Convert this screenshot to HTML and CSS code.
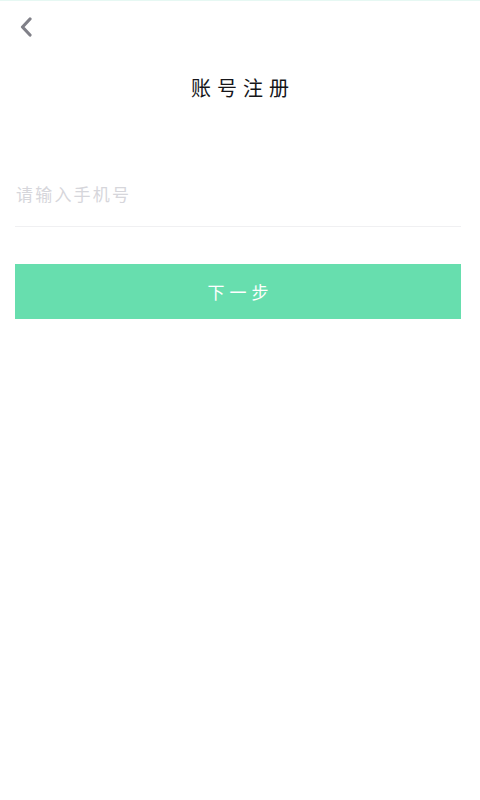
FILE: index.html
```html
<!DOCTYPE html>
<html lang="zh-CN">
<head>
<meta charset="utf-8">
<title>账号注册</title>
<link rel="stylesheet" href="styles.css">
</head>
<body>
<div class="page">
  <div class="topline"></div>
  <header class="nav">
    <button class="back" aria-label="返回">
      <svg width="14" height="20" viewBox="0 0 14 20"><path d="M11 2 L3.5 10 L11 18" fill="none" stroke="#808088" stroke-width="3.2" stroke-linecap="round" stroke-linejoin="round"/></svg>
    </button>
  </header>
  <h1 class="title">账号注册</h1>
  <form class="form">
    <div class="field">
      <input class="input" type="tel" placeholder="请输入手机号">
    </div>
    <button type="button" class="next">下一步</button>
  </form>
</div>
</body>
</html>
```
FILE: styles.css
```css
html, body {
  margin: 0;
  padding: 0;
  background: #ffffff;
}
body {
  font-family: "Noto Sans CJK SC", "Noto Sans", sans-serif;
}
.page {
  width: 480px;
  min-height: 800px;
}
.topline {
  height: 1px;
  background: #e6f8f3;
}
.nav {
  height: 51px;
  display: flex;
  align-items: flex-start;
}
.back {
  margin: 16px 0 0 19px;
  padding: 0;
  border: 0;
  background: none;
  width: 14px;
  height: 20px;
  display: block;
}
.back svg { display: block; }
.title {
  margin: 22px 0 0 0;
  text-align: center;
  font-size: 20px;
  line-height: 28px;
  font-weight: 400;
  color: #16161a;
  letter-spacing: 6px;
  text-indent: 6px;
}
.form {
  margin: 79px 19px 0 15px;
}
.field {
  border-bottom: 1px solid #f0f0f2;
  height: 45px;
}
.input {
  display: block;
  width: 100%;
  box-sizing: border-box;
  border: 0;
  outline: none;
  padding: 0 0 0 1px;
  height: 24px;
  font-family: "Noto Sans CJK SC", "Noto Sans", sans-serif;
  font-size: 17px;
  letter-spacing: 2.2px;
  color: #333;
  background: transparent;
}
.input::placeholder {
  color: #d6d6db;
}
.next {
  display: block;
  width: 100%;
  margin-top: 37px;
  height: 55px;
  border: 0;
  background: #67deae;
  color: #ffffff;
  font-family: "Noto Sans CJK SC", "Noto Sans", sans-serif;
  font-size: 17px;
  letter-spacing: 5px;
  text-indent: 5px;
  padding: 0;
}
```
